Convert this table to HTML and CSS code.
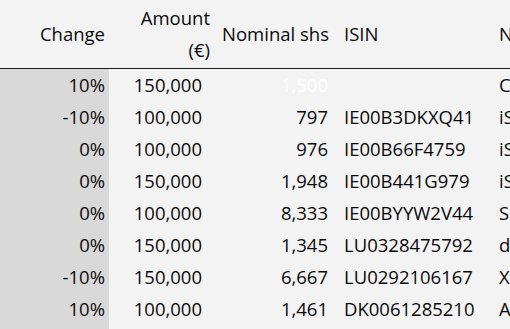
FILE: index.html
```html
<!DOCTYPE html>
<html>
<head>
<meta charset="utf-8">
<link rel="stylesheet" href="styles.css">
</head>
<body>
<table class="grid">
  <colgroup>
    <col class="c-change"><col class="c-amount"><col class="c-nom"><col class="c-isin"><col class="c-name">
  </colgroup>
  <thead>
    <tr>
      <th class="num h-change">Change</th>
      <th class="num h-amount">Amount<br>(€)</th>
      <th class="num h-nom">Nominal shs</th>
      <th class="txt">ISIN</th>
      <th class="txt name">N</th>
    </tr>
  </thead>
  <tbody>
    <tr><td class="num chg">10%</td><td class="num amt">150,000</td><td class="num nom faint">1,500</td><td class="txt"></td><td class="txt name">C</td></tr>
    <tr><td class="num chg">-10%</td><td class="num amt">100,000</td><td class="num nom">797</td><td class="txt">IE00B3DKXQ41</td><td class="txt name">iS</td></tr>
    <tr><td class="num chg">0%</td><td class="num amt">100,000</td><td class="num nom">976</td><td class="txt">IE00B66F4759</td><td class="txt name">iS</td></tr>
    <tr><td class="num chg">0%</td><td class="num amt">150,000</td><td class="num nom">1,948</td><td class="txt">IE00B441G979</td><td class="txt name">iS</td></tr>
    <tr><td class="num chg">0%</td><td class="num amt">100,000</td><td class="num nom">8,333</td><td class="txt">IE00BYYW2V44</td><td class="txt name">S</td></tr>
    <tr><td class="num chg">0%</td><td class="num amt">150,000</td><td class="num nom">1,345</td><td class="txt">LU0328475792</td><td class="txt name">d</td></tr>
    <tr><td class="num chg">-10%</td><td class="num amt">150,000</td><td class="num nom">6,667</td><td class="txt">LU0292106167</td><td class="txt name">X</td></tr>
    <tr><td class="num chg">10%</td><td class="num amt">100,000</td><td class="num nom">1,461</td><td class="txt">DK0061285210</td><td class="txt name">A</td></tr>
    <tr class="filler"><td class="num chg"></td><td></td><td></td><td></td><td></td></tr>
  </tbody>
</table>
</body>
</html>
```

FILE: styles.css
```css
html, body {
  margin: 0;
  padding: 0;
  background: #f3f3f3;
  overflow: hidden;
}
body {
  width: 510px;
  height: 329px;
  font-family: "Open Sans", "Noto Sans", sans-serif;
  font-size: 18.5px;
  color: #0a0a0a;
}
.grid {
  border-collapse: collapse;
  table-layout: fixed;
  width: 600px;
}
.c-change { width: 109px; }
.c-amount { width: 105px; }
.c-nom { width: 119px; }
.c-isin { width: 156px; }
.c-name { width: 111px; }

th, td {
  padding: 0;
  white-space: nowrap;
  overflow: hidden;
}
thead th {
  font-weight: normal;
  height: 68px;
  line-height: 32px;
  vertical-align: middle;
  border-bottom: 1px solid #1a1a1a;
  box-sizing: border-box;
}
tbody td {
  height: 32px;
  line-height: 32px;
}
.num { text-align: right; }
.txt { text-align: left; padding-left: 11px; }
.h-change { padding-right: 4px; }
.h-amount { padding-right: 4px; }
.h-nom { padding-right: 4px; }
.chg { background: #d9d9d9; padding-right: 4px; }
.amt { padding-right: 12px; }
.nom { padding-right: 5px; }
.name { padding-left: 10px; }
.faint { color: #ffffff; }
```
